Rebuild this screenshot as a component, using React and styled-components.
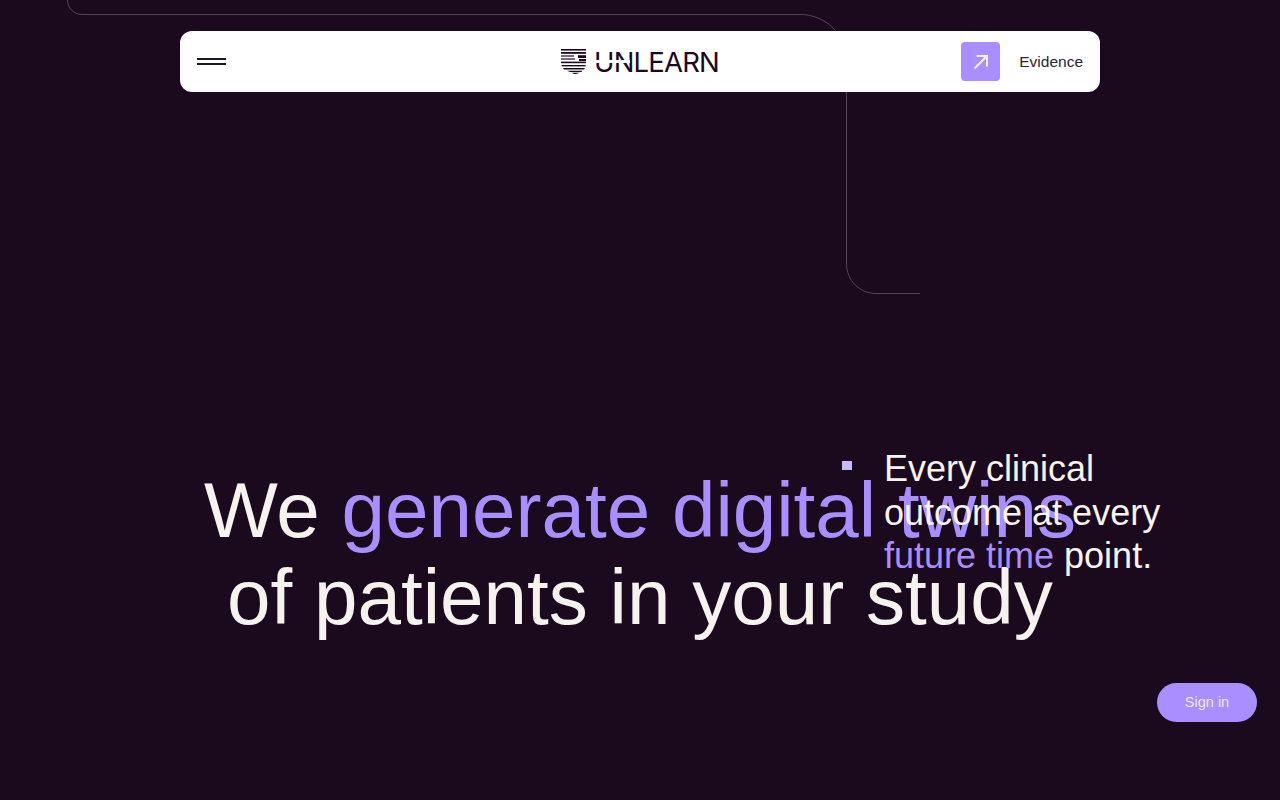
import React from "react";
import styled, { createGlobalStyle } from "styled-components";

const GlobalStyle = createGlobalStyle`
  html, body {
    margin: 0;
    padding: 0;
    background-color: #1b0a1e;
    font-family: "Liberation Sans", Arial, sans-serif;
  }
`;

export default function App() {
  return (
    <Page>
      <GlobalStyle />
      <FrameLines viewBox="0 0 1280 300" fill="none">
        <path d="M67.5 0 C67.5 8 74 14.5 82 14.5 H800 C826 14.5 846.5 35 846.5 61 V264 C846.5 280 859.5 293.5 876 293.5 H920" stroke="#54445a" strokeWidth="1" />
      </FrameLines>
      <NavBar>
        <MenuButton aria-label="Menu">
          <MenuLine />
          <MenuLine />
        </MenuButton>
        <Logo>
          <svg width="25" height="25" viewBox="0 0 25 25">
            <g fill="#1b0a1e">
              <path d="M0 0 H25 V1.6 H0 Z" />
              <path d="M0 3 H25 V4.8 H0 Z" />
              <path d="M0 6.4 H13 V7.6 H0 Z" />
              <path d="M17 6.2 H25 V9 H17 Z" />
              <path d="M0 9.4 H14 V10.6 H0 Z" />
              <path d="M18 10 H25 V12 H18 Z" />
              <path d="M0 12.6 H25 V14.2 H0 Z" />
              <path d="M0.6 16 H24.6 V17.4 H0.6 Z" />
              <path d="M2 19 H24 L23 20.4 H3 Z" />
              <path d="M6 21.8 H21.5 L20.4 23 H9 Z" />
              <path d="M11 23.8 H19 L15 25 H13 Z" />
            </g>
          </svg>
          <LogoWord>UNLEARN<LogoCut /></LogoWord>
        </Logo>
        <NavRight>
          <ArrowTile>
            <svg width="16" height="16" viewBox="0 0 16 16" fill="none" stroke="#f5f0ff" strokeWidth="2">
              <path d="M1.5 14.5 L14 2 M3.5 2 H14 V12.5" />
            </svg>
          </ArrowTile>
          <EvidenceLabel>Evidence</EvidenceLabel>
        </NavRight>
      </NavBar>
      <Headline>
        <HeadLine>We <Accent>generate digital twins</Accent></HeadLine>
        <HeadLine>of patients in your study</HeadLine>
      </Headline>
      <SideNote>
        <Bullet />
        <SideText>
          Every clinical<br />
          outcome at every<br />
          <Accent>future time</Accent> point.
        </SideText>
      </SideNote>
      <SignIn>Sign in</SignIn>
    </Page>
  );
}

const Page = styled.div`
  position: relative;
  display: flex;
  flex-direction: column;
  align-items: center;
  width: 1280px;
  height: 800px;
  overflow: hidden;
  background-color: #1b0a1e;
`;

const FrameLines = styled.svg`
  position: absolute;
  top: 0;
  left: 0;
  width: 1280px;
  height: 300px;
`;

const NavBar = styled.header`
  position: relative;
  display: grid;
  grid-template-columns: 1fr auto 1fr;
  align-items: center;
  box-sizing: border-box;
  width: 920px;
  height: 61px;
  margin-top: 31px;
  padding: 0 17px;
  background-color: #ffffff;
  border-radius: 12px;
`;

const MenuButton = styled.button`
  display: flex;
  flex-direction: column;
  gap: 3px;
  width: 29px;
  padding: 0;
  background: none;
  border: none;
`;

const MenuLine = styled.span`
  display: block;
  height: 2px;
  background-color: #1b1620;
`;

const Logo = styled.div`
  display: flex;
  align-items: center;
  gap: 8px;
`;

const LogoWord = styled.span`
  position: relative;
  margin-top: 1px;
  color: #1b0a1e;
  font-family: Inter, sans-serif;
  font-size: 27.5px;
  line-height: 25px;
  letter-spacing: -0.8px;
`;

const LogoCut = styled.span`
  position: absolute;
  top: 10px;
  left: 0;
  width: 36px;
  height: 3px;
  background-color: #ffffff;
`;

const NavRight = styled.div`
  display: flex;
  align-items: center;
  justify-content: flex-end;
  gap: 19px;
`;

const ArrowTile = styled.div`
  display: flex;
  align-items: center;
  justify-content: center;
  width: 39px;
  height: 39px;
  background-color: #a98eff;
  border-radius: 4px;
`;

const EvidenceLabel = styled.span`
  color: #2a2433;
  font-size: 15.5px;
`;

const Headline = styled.h1`
  margin: 375px 0 0;
  color: #f6f2ee;
  font-size: 78.2px;
  font-weight: 400;
  line-height: 87px;
  text-align: center;
`;

const HeadLine = styled.div`
  white-space: nowrap;
`;

const Accent = styled.span`
  color: #a98eff;
`;

const SideNote = styled.div`
  position: absolute;
  top: 447px;
  left: 842px;
  display: flex;
  gap: 32px;
`;

const Bullet = styled.span`
  width: 10px;
  height: 9px;
  margin-top: 14px;
  background-color: #c6baff;
`;

const SideText = styled.p`
  margin: 0;
  color: #f6f2ee;
  font-size: 36px;
  line-height: 43.5px;
  white-space: nowrap;
`;

const SignIn = styled.button`
  position: absolute;
  top: 683px;
  left: 1157px;
  width: 100px;
  height: 39px;
  padding: 0 0 2px;
  color: #efe9ff;
  background-color: #a98eff;
  border: none;
  border-radius: 20px;
  font-family: "Liberation Sans", Arial, sans-serif;
  font-size: 14.5px;
`;
